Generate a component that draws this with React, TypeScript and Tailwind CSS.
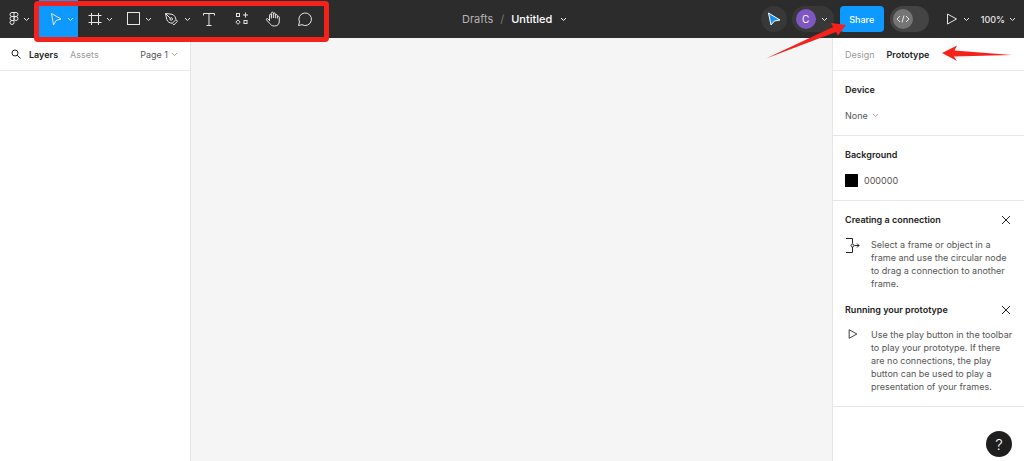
import type { ReactNode } from "react";

function Chevron({ className = "" }: { className?: string }) {
  return (
    <svg className={`shrink-0 ${className}`} width="7" height="7" viewBox="0 0 7 7" fill="none" stroke="currentColor">
      <path d="M1 2l2.5 2.5L6 2" />
    </svg>
  );
}

function PlayIcon({ size = 14 }: { size?: number }) {
  return (
    <svg width={size} height={size} viewBox="0 0 14 14" fill="none" stroke="currentColor" strokeLinejoin="round">
      <path d="M2.5 2v10l9-5z" />
    </svg>
  );
}

function CloseIcon() {
  return (
    <svg width="10" height="10" viewBox="0 0 10 10" fill="none" stroke="currentColor">
      <path d="M1 1l8 8M9 1L1 9" />
    </svg>
  );
}

type Tool = { name: string; menu?: boolean; active?: boolean; icon: ReactNode };

const tools: Tool[] = [
  {
    name: "Move",
    menu: true,
    active: true,
    icon: <path d="M4.500 2.500l9.500 5.500-5 1.500-2.500 4.500z" strokeLinejoin="round" />,
  },
  { name: "Frame", menu: true, icon: <path d="M5.500 2v12M12.500 2v12M2.500 4.500h13M2.500 11.500h13" /> },
  { name: "Rectangle", menu: true, icon: <rect x="2.500" y="1.500" width="12" height="12" /> },
  {
    name: "Pen",
    menu: true,
    icon: (
      <>
        <path
          d="M1.500 2.500l6.500.8c2.500.8 3.700 3 3.900 5.400l-3.500 3.500C5.500 12 3.500 11 2.800 8.500zM1.500 2.500l4.700 4.700M12 8.800l1.500 1.500-3.600 3.600-1.500-1.500"
          strokeLinejoin="round"
        />
        <circle cx="7.200" cy="8" r="1.300" />
      </>
    ),
  },
  { name: "Text", icon: <path d="M2.500 4.500v-2h11v2M8 2.500v12M5.500 14.500h5" /> },
  {
    name: "Resources",
    icon: (
      <>
        <rect x="3.500" y="2.500" width="3" height="3" />
        <path d="M12.500 1.500v5M10 4h5M5 8.900l2.200 2.200L5 13.300l-2.200-2.200z" />
        <rect x="11" y="9.500" width="3" height="3" />
      </>
    ),
  },
  {
    name: "Hand",
    icon: (
      <path
        d="M4.500 10V4.200c0-1.300 1.900-1.300 1.900 0V7.500M6.400 6V2.200c0-1.400 2-1.400 2 0V7M8.400 3c0-1.500 2-1.500 2 0v4.300M10.400 4.500c0-1.300 2-1.300 2 0V7.500M12.400 6.300c0-1.300 1.900-1.300 1.900 0V10c0 3-1.500 5-4.800 5-2.500 0-3.700-1-4.800-2.600L1.600 9c-.8-1.200.7-2 1.600-1l1.300 1.500"
        strokeLinejoin="round"
      />
    ),
  },
  {
    name: "Comment",
    icon: <path d="M1.500 14.500l1-3.500a6.300 6.300 0 1 1 2.500 2.700z" strokeLinejoin="round" />,
  },
];

function ToolButton({ tool }: { tool: Tool }) {
  return (
    <button
      aria-label={tool.name}
      className={`flex h-full shrink-0 items-center ${tool.menu ? "w-[39px] justify-between pr-1 pl-2" : "w-8 pl-[6px]"} ${tool.active ? "bg-[#0d99ff]" : ""}`}
    >
      <svg width="16" height="16" viewBox="0 0 16 16" fill="none" stroke="currentColor">
        {tool.icon}
      </svg>
      {tool.menu && <Chevron />}
    </button>
  );
}

function Toolbar() {
  return (
    <header className="relative flex h-[38px] items-center justify-between bg-[#2c2c2c] text-[#e6e6e6]">
      <div className="flex h-full items-center">
        <button aria-label="Main menu" className="flex h-full w-[39px] items-center gap-1 pl-[9px]">
          <svg width="10" height="14" viewBox="0 0 10 14" fill="none" stroke="currentColor">
            <path d="M5 .5H3a2 2 0 0 0 0 4h2zM5 .5h2a2 2 0 0 1 0 4H5M5 4.500H3a2 2 0 0 0 0 4h2zM5 8.500H3a2 2 0 1 0 2 2z" />
            <circle cx="7" cy="6.500" r="2" />
          </svg>
          <Chevron />
        </button>
        <div className="relative flex h-full">
          {tools.map((tool) => (
            <ToolButton key={tool.name} tool={tool} />
          ))}
          <div className="pointer-events-none absolute top-px -right-[6px] -bottom-1 -left-[5px] rounded-sm border-5 border-[#f5221b]" />
        </div>
      </div>

      <div className="absolute left-1/2 flex -translate-x-[50px] items-center text-[11px]">
        <a href="#drafts" className="text-[#b3b3b3]">Drafts</a>
        <span className="px-[7px] text-[#777]">/</span>
        <button className="flex items-center gap-2 font-medium text-white">
          Untitled
          <Chevron />
        </button>
      </div>

      <div className="flex items-center pr-2">
        <button aria-label="Cursor chat" className="mr-[5px] flex size-[26px] items-center justify-center rounded-full bg-[#383838]">
          <svg width="14" height="14" viewBox="0 0 14 14">
            <path d="M1.500 1l11.500 7-5.500 1L4 13z" fill="#1593f5" stroke="#fff" />
          </svg>
        </button>
        <button aria-label="Account" className="mr-[6px] flex h-[26px] w-[42px] items-center justify-between rounded-full bg-[#383838] pr-[6px] pl-1">
          <span className="flex size-5 items-center justify-center rounded-full bg-[#7e57c2] text-[10px] text-white">C</span>
          <Chevron />
        </button>
        <button className="h-[26px] w-11 rounded-[4px] bg-[#0d99ff] font-medium text-white">Share</button>
        <button aria-label="Dev mode" className="mr-4 ml-[6px] flex h-[26px] w-[39px] items-center rounded-full bg-[#444] pl-[3px]">
          <span className="flex size-5 items-center justify-center rounded-full bg-[#757575]">
            <svg width="14" height="10" viewBox="0 0 14 10" fill="none" stroke="currentColor">
              <path d="M4 2L1 5l3 3M10 2l3 3-3 3M8 1.500l-2 7" />
            </svg>
          </span>
        </button>
        <button aria-label="Present" className="mr-[11px] flex items-center gap-1">
          <PlayIcon />
          <Chevron />
        </button>
        <button className="flex items-center gap-1 font-medium">
          100%
          <Chevron />
        </button>
      </div>
    </header>
  );
}

function LayersPanel() {
  return (
    <aside className="w-[191px] shrink-0 border-r border-[#e6e6e6] bg-white">
      <div className="flex h-[33px] items-center border-b border-[#ebebeb] pr-3 pl-[11px]">
        <button aria-label="Search">
          <svg width="10" height="10" viewBox="0 0 10 10" fill="none" stroke="currentColor">
            <circle cx="4" cy="4" r="3" />
            <path d="M6.200 6.200L9.500 9.500" />
          </svg>
        </button>
        <button className="ml-2 font-semibold">Layers</button>
        <button className="ml-3 text-[#999]">Assets</button>
        <button className="ml-auto flex items-center gap-[3px] text-[#555]">
          Page 1
          <Chevron className="text-[#aaa]" />
        </button>
      </div>
    </aside>
  );
}

function Hint({ title, icon, children }: { title: string; icon: ReactNode; children: ReactNode }) {
  return (
    <div>
      <div className="flex items-center justify-between pr-[3px]">
        <h2 className="font-semibold">{title}</h2>
        <button aria-label={`Close ${title}`}>
          <CloseIcon />
        </button>
      </div>
      <div className="mt-3 flex">
        <div className="w-[26px] shrink-0">{icon}</div>
        <p className="text-[#555]">{children}</p>
      </div>
    </div>
  );
}

function PrototypePanel() {
  return (
    <aside className="relative w-48 shrink-0 border-l border-[#e6e6e6] bg-white">
      <div className="flex h-[33px] items-center gap-3 border-b border-[#ebebeb] px-3">
        <button className="text-[#999]">Design</button>
        <button className="font-semibold">Prototype</button>
      </div>
      <section className="h-[65px] border-b border-[#e6e6e6] px-3 pt-3">
        <h2 className="font-semibold">Device</h2>
        <button className="mt-[13px] flex items-center gap-1 text-[#555]">
          None
          <Chevron className="text-[#aaa]" />
        </button>
      </section>
      <section className="h-[65px] border-b border-[#e6e6e6] px-3 pt-3">
        <h2 className="font-semibold">Background</h2>
        <div className="mt-[13px] flex items-center gap-[6px] text-[#555]">
          <span className="size-[13px] bg-black" />
          000000
        </div>
      </section>
      <section className="flex flex-col gap-[13px] border-b border-[#e6e6e6] pt-3 pr-[10px] pb-[13px] pl-3">
        <Hint
          title="Creating a connection"
          icon={
            <svg width="16" height="15" viewBox="0 0 16 15" fill="none" stroke="currentColor">
              <path d="M1 .5h6.500v5M7.500 9v5.500H1M9.500 7.500H14M12 5.500l2 2-2 2" />
              <circle cx="7.500" cy="7.500" r="1.500" />
            </svg>
          }
        >
          Select a frame or object in a frame and use the circular node to drag a connection to another frame.
        </Hint>
        <Hint title="Running your prototype" icon={<div className="pl-[2px]"><PlayIcon size={12} /></div>}>
          Use the play button in the toolbar to play your prototype. If there are no connections, the play button can be used to play a presentation of your frames.
        </Hint>
      </section>
      <button aria-label="Help" className="absolute right-3 bottom-1 flex size-[26px] items-center justify-center rounded-full bg-[#1e1e1e] text-[15px] font-light text-white">
        ?
      </button>
    </aside>
  );
}

export default function App() {
  return (
    <div className="relative flex h-screen flex-col bg-[#f5f5f5] font-['Inter',sans-serif] text-[9px] leading-[13px] text-[#222]">
      <Toolbar />
      <div className="flex flex-1 justify-between">
        <LayersPanel />
        <main className="flex-1" />
        <PrototypePanel />
      </div>
      <svg className="pointer-events-none absolute top-5 right-[174px]" width="86" height="40" viewBox="0 0 86 40" fill="#f5221b">
        <path d="M2 38.500L69 7 67 3 82 5 74 15.500 72 12z" />
      </svg>
      <svg className="pointer-events-none absolute top-[45px] right-2.5" width="72" height="17" viewBox="0 0 72 17" fill="#f5221b">
        <path d="M0 8L15 .5 12.500 5.500 70 10 12 11.500l3 4.500z" />
      </svg>
    </div>
  );
}
